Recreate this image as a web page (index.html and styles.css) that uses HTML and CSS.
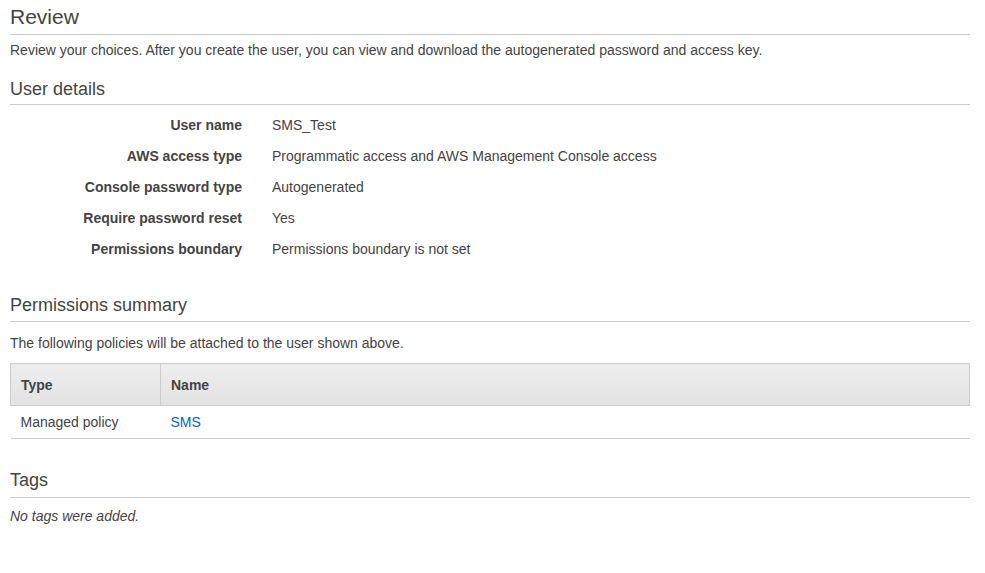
FILE: index.html
```html
<!DOCTYPE html>
<html>
<head>
<meta charset="utf-8">
<link rel="stylesheet" href="styles.css">
</head>
<body>
<div class="page">
  <h1 class="title">Review</h1>
  <p class="desc intro">Review your choices. After you create the user, you can view and download the autogenerated password and access key.</p>

  <h2 class="section user">User details</h2>
  <div class="details">
    <div class="row"><div class="label">User name</div><div class="value">SMS_Test</div></div>
    <div class="row"><div class="label">AWS access type</div><div class="value">Programmatic access and AWS Management Console access</div></div>
    <div class="row"><div class="label">Console password type</div><div class="value">Autogenerated</div></div>
    <div class="row"><div class="label">Require password reset</div><div class="value">Yes</div></div>
    <div class="row"><div class="label">Permissions boundary</div><div class="value">Permissions boundary is not set</div></div>
  </div>

  <h2 class="section perm">Permissions summary</h2>
  <p class="desc perm-desc">The following policies will be attached to the user shown above.</p>
  <table class="policies">
    <thead>
      <tr><th class="c-type">Type</th><th>Name</th></tr>
    </thead>
    <tbody>
      <tr><td class="c-type">Managed policy</td><td><a class="link" href="#">SMS</a></td></tr>
    </tbody>
  </table>

  <h2 class="section tags">Tags</h2>
  <p class="desc tags-desc">No tags were added.</p>
</div>
</body>
</html>
```

FILE: styles.css
```css
html, body {
  margin: 0;
  padding: 0;
  background: #fff;
}
body {
  font-family: "Liberation Sans", Arial, sans-serif;
  font-size: 14px;
  color: #444;
}
.page {
  padding: 0 15px 0 10px;
  width: 960px;
}
.title {
  margin: 0;
  padding-top: 4px;
  padding-bottom: 5px;
  font-size: 21px;
  font-weight: normal;
  line-height: 25px;
  border-bottom: 1px solid #ccc;
}
.desc {
  margin: 0;
  line-height: 17px;
}
.intro {
  padding-top: 7px;
}
.section {
  margin: 0;
  font-size: 18px;
  font-weight: normal;
  line-height: 22px;
  border-bottom: 1px solid #ccc;
}
.section.user {
  padding-top: 19px;
  padding-bottom: 4px;
}
.details {
  padding-top: 12px;
  padding-bottom: 22px;
}
.row {
  display: flex;
  height: 31px;
  line-height: 17px;
}
.label {
  width: 232px;
  text-align: right;
  font-weight: bold;
}
.value {
  padding-left: 30px;
}
.section.perm {
  padding-top: 0;
  padding-bottom: 5px;
}
.perm-desc {
  padding-top: 13px;
}
.policies {
  margin-top: 11px;
  width: 960px;
  border-collapse: collapse;
}
.policies th {
  text-align: left;
  font-weight: bold;
  height: 41px;
  padding: 0 10px;
  background: linear-gradient(#eeeeee, #e2e2e2);
  border: 1px solid #ccc;
}
.policies th.c-type {
  width: 129px;
}
.policies td {
  height: 32px;
  padding: 0 10px;
  border-bottom: 1px solid #ccc;
}
.link {
  color: #0066cc;
  text-decoration: none;
}
.section.tags {
  padding-top: 30px;
  padding-bottom: 6px;
}
.tags-desc {
  padding-top: 10px;
  font-style: italic;
}
```
